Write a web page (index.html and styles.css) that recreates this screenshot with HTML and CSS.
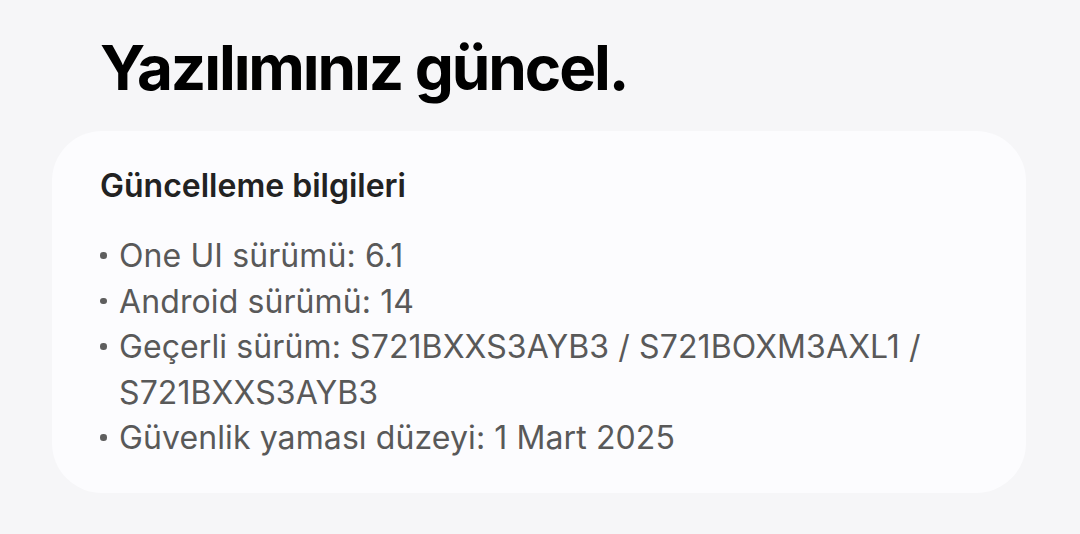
FILE: index.html
```html
<!DOCTYPE html>
<html lang="tr">
<head>
<meta charset="utf-8">
<link rel="stylesheet" href="styles.css">
</head>
<body>
<main class="page">
  <h1 class="title">Yazılımınız güncel.</h1>
  <section class="card">
    <h2 class="card-title">Güncelleme bilgileri</h2>
    <ul class="info">
      <li class="item"><span class="dot" aria-hidden="true"></span><span class="text">One UI sürümü: 6.1</span></li>
      <li class="item"><span class="dot" aria-hidden="true"></span><span class="text">Android sürümü: 14</span></li>
      <li class="item"><span class="dot" aria-hidden="true"></span><span class="text">Geçerli sürüm: S721BXXS3AYB3 / S721BOXM3AXL1 / S721BXXS3AYB3</span></li>
      <li class="item"><span class="dot" aria-hidden="true"></span><span class="text">Güvenlik yaması düzeyi: 1 Mart 2025</span></li>
    </ul>
  </section>
</main>
</body>
</html>
```
FILE: styles.css
```css
html, body {
  margin: 0;
  padding: 0;
  background: #f6f6f8;
}
body {
  width: 1080px;
  height: 534px;
  overflow: hidden;
  font-family: Inter, "Noto Sans", sans-serif;
}
.page {
  padding: 30px 54px 0 52px;
  display: flex;
  flex-direction: column;
}
.title {
  margin: 0 0 0 48px;
  font-size: 62px;
  line-height: 76px;
  font-weight: 700;
  color: #000;
  letter-spacing: -2.1px;
}
.card {
  margin-top: 25px;
  background: #fcfcfe;
  border-radius: 50px;
  padding: 35px 40px 0 48px;
  height: 362px;
  box-sizing: border-box;
}
.card-title {
  margin: 0;
  font-size: 32px;
  line-height: 40px;
  font-weight: 600;
  color: #222;
  letter-spacing: 0;
}
.info {
  list-style: none;
  margin: 27px 0 0 0;
  padding: 0;
  color: #595959;
  font-size: 32px;
  line-height: 45.5px;
  letter-spacing: 0.1px;
}
.item {
  display: flex;
  align-items: flex-start;
}
.dot {
  width: 19px;
  height: 45.5px;
  flex: none;
  display: flex;
  align-items: center;
}
.dot::before {
  content: "";
  width: 6.5px;
  height: 6.5px;
  margin-top: -1px;
  border-radius: 50%;
  background: #5e5e5e;
}
.text {
  flex: 1;
}
```
